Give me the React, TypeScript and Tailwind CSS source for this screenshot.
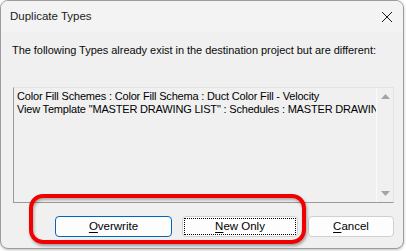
const FONT = "font-['Segoe_UI','Liberation_Sans',Arial,sans-serif]";

function CloseIcon() {
  return (
    <svg width="12" height="12" viewBox="0 0 12 12" className="text-[#1a1a1a]">
      <path d="M1 1 L11 11 M11 1 L1 11" stroke="currentColor" strokeWidth="1" fill="none" />
    </svg>
  );
}

function Mnemonic({ text }: { text: string }) {
  return (
    <>
      <span className="underline underline-offset-2">{text[0]}</span>
      {text.slice(1)}
    </>
  );
}

const ITEMS = [
  "Color Fill Schemes : Color Fill Schema : Duct Color Fill - Velocity",
  'View Template "MASTER DRAWING LIST" : Schedules : MASTER DRAWING LIST',
];

export default function App() {
  return (
    <div className={`h-[251px] w-[406px] bg-white ${FONT}`}>
      <div className="flex h-[249px] w-[404px] flex-col overflow-hidden rounded-[8px] border border-[#9c9c9c] bg-[#f0f0f0] shadow-[0_1px_3px_rgba(0,0,0,0.25)]">
        <div className="flex h-[31px] shrink-0 items-center justify-between bg-[#f3f3f3] pl-[9px] pr-[10px]">
          <span className="text-[11.5px] leading-none text-[#1b1b1b]">Duplicate Types</span>
          <CloseIcon />
        </div>

        <div className="relative flex flex-1 flex-col">
          <p className="ml-[11px] mt-[11px] whitespace-nowrap text-[11px] leading-[14px] tracking-[-0.04px] text-[#0a0a0a]">
            The following Types already exist in the destination project but are different:
          </p>

          <div className="ml-[12px] mt-[30px] flex h-[116px] w-[381px] border border-[#e4e4e4] border-b-[#9a9a9a] border-l-[#9a9a9a] bg-[#f0f0f0]">
            <ul className="min-w-0 flex-1 overflow-hidden whitespace-nowrap pl-[3px] pt-[2px] text-[11px] leading-[13px] tracking-[-0.18px] text-black">
              {ITEMS.map((item) => (
                <li key={item}>{item}</li>
              ))}
            </ul>
            <div className="flex w-[17px] shrink-0 flex-col items-center justify-between border-l border-[#fafafa] py-[6px]">
              <svg width="9" height="5" viewBox="0 0 9 5">
                <path d="M0 5 L4.5 0 L9 5 Z" fill="#a3a3a3" />
              </svg>
              <svg width="9" height="5" viewBox="0 0 9 5">
                <path d="M0 0 L9 0 L4.5 5 Z" fill="#a3a3a3" />
              </svg>
            </div>
          </div>

          <div className="ml-[54px] mt-[13px] flex gap-[10px] text-[11.5px] text-black">
            <button className="flex h-[21px] w-[117px] items-center justify-center rounded-[4px] border border-[#0067c0] bg-[#fdfdfd] leading-none">
              <Mnemonic text="Overwrite" />
            </button>
            <button className="flex h-[21px] w-[116px] items-center justify-center rounded-[4px] border border-[#d0d0d0] bg-[#fdfdfd] p-[1px] leading-none">
              <span className="flex h-full w-full items-center justify-center border border-dotted border-black">
                <Mnemonic text="New Only" />
              </span>
            </button>
            <button className="flex h-[21px] w-[86px] items-center justify-center rounded-[4px] border border-[#d0d0d0] bg-[#fdfdfd] leading-none">
              <Mnemonic text="Cancel" />
            </button>
          </div>

          <div className="absolute left-[28px] top-[162px] h-[50px] w-[277px] rounded-[14px] border-[4px] border-[#f00000] shadow-[1px_2px_3px_rgba(0,0,0,0.35),inset_1px_2px_3px_rgba(0,0,0,0.3)]" />
        </div>
      </div>
    </div>
  );
}
